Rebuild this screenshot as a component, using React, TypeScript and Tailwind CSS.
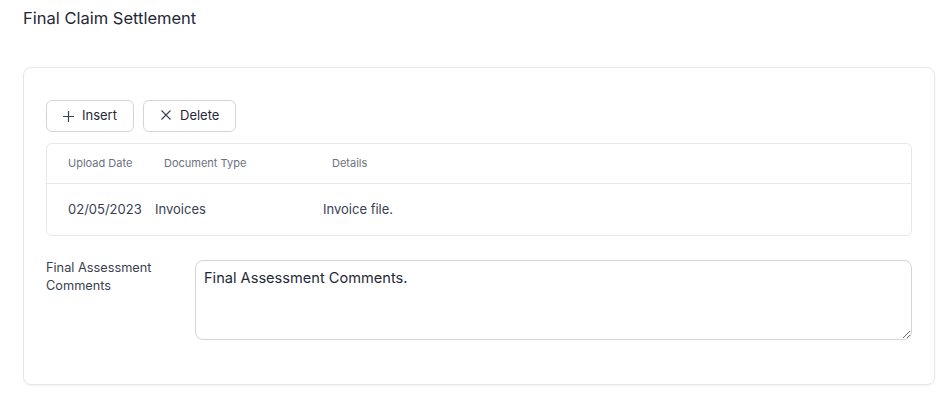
export default function App() {
  const rows = [{ date: '02/05/2023', type: 'Invoices', details: 'Invoice file.' }];

  return (
    <div className="min-h-screen bg-white px-[23px] pt-[8px] text-[#1f2937]" style={{ fontFamily: 'Inter, "Noto Sans", sans-serif' }}>
      <h1 className="text-[16.5px] leading-[20px] font-normal text-[#1f2937]">Final Claim Settlement</h1>

      <div className="mt-[39px] w-[912px] h-[318px] rounded-lg border border-[#e5e7eb] shadow-[0_1px_2px_rgba(0,0,0,0.06)] px-[22px] pt-[32px]">
        {/* Toolbar */}
        <div className="flex gap-[9px]">
          <button className="flex items-center gap-[8px] h-[32px] w-[88px] pl-[16px] rounded-md border border-[#d1d5db] bg-white text-[13px] text-[#1f2937]">
            <svg width="11" height="11" viewBox="0 0 11 11" className="text-[#374151]">
              <path d="M5.5 0v11M0 5.5h11" stroke="currentColor" strokeWidth="1.2" fill="none" />
            </svg>
            Insert
          </button>
          <button className="flex items-center gap-[9px] h-[32px] w-[93px] pl-[17px] rounded-md border border-[#d1d5db] bg-white text-[13px] text-[#1f2937]">
            <svg width="10" height="10" viewBox="0 0 10 10" className="-mt-[3px] text-[#374151]">
              <path d="M0.5 0.5l9 9M9.5 0.5l-9 9" stroke="currentColor" strokeWidth="1.1" fill="none" />
            </svg>
            Delete
          </button>
        </div>

        {/* Documents table */}
        <div className="mt-[11px] rounded-md border border-[#e5e7eb]">
          <div className="flex h-[40px] items-center border-b border-[#e5e7eb] text-[11px] text-[#6b7280]">
            <div className="w-[109px] pl-[21px]">Upload Date</div>
            <div className="w-[176px] pl-[8px]">Document Type</div>
            <div>Details</div>
          </div>
          {rows.map((r, i) => (
            <div key={i} className="flex h-[51px] items-center text-[13px] text-[#374151]">
              <div className="w-[108px] pl-[21px]">{r.date}</div>
              <div className="w-[168px]">{r.type}</div>
              <div>{r.details}</div>
            </div>
          ))}
        </div>

        {/* Comments */}
        <div className="mt-[24px] flex">
          <label className="w-[149px] -mt-[1px] text-[12.75px] leading-[18px] text-[#374151]">
            Final Assessment
            <br />
            Comments
          </label>
          <textarea
            className="h-[80px] flex-1 rounded-lg border border-[#d1d5db] px-[8px] py-[7px] text-[14.6px] leading-[20px] text-[#1f2937] outline-none"
            defaultValue="Final Assessment Comments."
          />
        </div>
      </div>
    </div>
  );
}
